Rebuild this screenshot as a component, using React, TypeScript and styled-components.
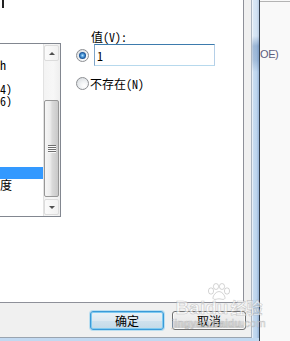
import React from 'react';
import styled, { createGlobalStyle } from 'styled-components';

const GlobalStyle = createGlobalStyle`
  html, body {
    margin: 0;
    padding: 0;
  }
  body {
    width: 290px;
    height: 341px;
    overflow: hidden;
    font-family: "Noto Sans Mono CJK SC", "Noto Sans CJK SC", "Liberation Sans", sans-serif;
    font-size: 12px;
    color: #000;
  }
`;

const Screen = styled.div`
  position: relative;
  display: flex;
  width: 290px;
  height: 341px;
  overflow: hidden;
  background: #f9f9f9;
`;

// the dialog, its left part lies outside the shot
const Window = styled.div`
  flex: none;
  width: 460px;
  margin-left: -200px;
  display: flex;
  flex-direction: column;
`;

const WindowBody = styled.div`
  display: flex;
  height: 338px;
`;

const Client = styled.div`
  flex: 1;
  display: flex;
  flex-direction: column;
  background: #f0f0f0;
  border-right: 1px solid #aab4c0;
  border-bottom: 1px solid #9aa4b0;
`;

const SideFrame = styled.div`
  width: 7px;
  border-right: 1px solid #34404e;
  background:
    linear-gradient(
      to bottom,
      rgba(255, 255, 255, 0.35) 0,
      rgba(255, 255, 255, 0.35) 36px,
      rgba(30, 70, 130, 0.22) 46px,
      rgba(30, 70, 130, 0.18) 60px,
      rgba(255, 255, 255, 0.05) 72px,
      rgba(255, 255, 255, 0) 100%
    ),
    linear-gradient(
      to right,
      #e6eef7 0,
      #e6eef7 1px,
      #c6dbf0 1px,
      #b9d2ec 5px,
      #9dbadc 6px,
      #9dbadc 7px
    );
`;

const BottomFrame = styled.div`
  height: 3px;
  background: #c2d9f1;
  border-right: 1px solid #34404e;
`;

const Panel = styled.div`
  display: flex;
  align-items: flex-start;
  height: 303px;
  box-sizing: border-box;
  margin-right: 7px;
  padding-left: 89px;
  background: #fff;
  border-right: 1px solid #8e9099;
  border-bottom: 1px solid #8e9099;
`;

const LeftColumn = styled.div`
  display: flex;
  flex-direction: column;
`;

const CutMark = styled.div`
  width: 2px;
  height: 8px;
  margin-left: 113px;
  background: #222;
`;

const ListBox = styled.div`
  display: flex;
  width: 172px;
  height: 174px;
  box-sizing: border-box;
  margin-top: 35px;
  border: 1px solid #828790;
  background: #fff;
`;

const Items = styled.div`
  flex: 1;
  padding-top: 3px;
  overflow: hidden;
`;

const Item = styled.div<{ $selected?: boolean }>`
  height: 12px;
  line-height: 12px;
  padding-left: 2px;
  white-space: nowrap;
  overflow: hidden;
  background: ${(p) => (p.$selected ? '#3399ff' : 'transparent')};
  color: ${(p) => (p.$selected ? '#fff' : '#000')};
`;

const ScrollBar = styled.div`
  width: 17px;
  display: flex;
  flex-direction: column;
  background: linear-gradient(to right, #e2e2e2 0, #e2e2e2 1px, #f3f3f3 1px, #f7f7f7 60%, #eeeeee 100%);
`;

const ArrowButton = styled.div`
  box-sizing: border-box;
  margin: 1px 1px 0 1px;
  height: 16px;
  border: 1px solid #dcdcdc;
  border-radius: 2px;
  background: linear-gradient(to right, #fbfbfb, #f1f1f1);
  display: flex;
  align-items: center;
  justify-content: center;
`;

const Arrow = styled.span<{ $down?: boolean }>`
  width: 0;
  height: 0;
  border-left: 3.5px solid transparent;
  border-right: 3.5px solid transparent;
  ${(p) =>
    p.$down
      ? 'border-top: 3px solid #4f4f4f;'
      : 'border-bottom: 3px solid #4f4f4f;'}
`;

const Track = styled.div<{ $size?: number }>`
  height: ${(p) => (p.$size ? `${p.$size}px` : 'auto')};
  flex: ${(p) => (p.$size ? 'none' : '1')};
`;

const Thumb = styled.div`
  height: 97px;
  margin: 0 1px;
  box-sizing: border-box;
  border: 1px solid #979797;
  border-radius: 2px;
  background: linear-gradient(to right, #f6f6f6 0%, #ececec 40%, #dadada 55%, #c9c9c9 100%);
  display: flex;
  align-items: center;
  justify-content: center;
`;

const Grip = styled.span`
  width: 8px;
  height: 8px;
  background: repeating-linear-gradient(to bottom, #6f6f6f 0, #6f6f6f 1px, #fafafa 1px, #fafafa 2px);
`;

const RightColumn = styled.div`
  display: flex;
  flex-direction: column;
  margin-left: 15px;
  padding-top: 29px;
`;

const FieldLabel = styled.div`
  margin-left: 15px;
  height: 15px;
  line-height: 15px;
  white-space: nowrap;
`;

const OptionRow = styled.div<{ $gap: number; $top?: number }>`
  display: flex;
  align-items: center;
  gap: ${(p) => p.$gap}px;
  margin-top: ${(p) => p.$top ?? 0}px;
  white-space: nowrap;
  line-height: 13px;
`;

const Radio = styled.span<{ $checked?: boolean }>`
  flex: none;
  width: 13px;
  height: 13px;
  box-sizing: border-box;
  border-radius: 50%;
  border: 1px solid #8d8f93;
  background: radial-gradient(circle at 65% 70%, #ffffff 0, #f2f4f6 35%, #d2d6da 100%);
  display: flex;
  align-items: center;
  justify-content: center;
  &::after {
    content: '';
    display: ${(p) => (p.$checked ? 'block' : 'none')};
    width: 7px;
    height: 7px;
    border-radius: 50%;
    background: radial-gradient(circle at 50% 50%, #b6e2ff 0, #5aa4e0 28%, #1c5aa0 60%, #0e3468 100%);
  }
`;

const ValueInput = styled.input`
  width: 121px;
  height: 22px;
  box-sizing: border-box;
  margin: 0;
  padding: 0 0 0 2px;
  border: 1px solid;
  border-color: #3d7bad #b5cfe7 #b7d9ed #7ea4c8;
  background: #fff;
  font: inherit;
  color: #000;
  outline: none;
`;

const ButtonBar = styled.div`
  display: flex;
  justify-content: flex-end;
  gap: 8px;
  height: 34px;
  box-sizing: border-box;
  padding: 8px 5px 0 0;
`;

const DialogButton = styled.button<{ $default?: boolean }>`
  width: 74px;
  height: 19px;
  box-sizing: border-box;
  margin: 0;
  padding: 0;
  border-radius: 3px;
  font-family: "Noto Sans CJK SC", sans-serif;
  font-size: 12px;
  line-height: 17px;
  color: #000;
  border: 1px solid ${(p) => (p.$default ? '#3a9ad8' : '#707070')};
  background: ${(p) =>
    p.$default
      ? 'linear-gradient(to bottom, #eaf2f7 0%, #dde9f1 50%, #cfe2ee 50%, #c3dae8 100%)'
      : 'linear-gradient(to bottom, #f2f2f2 0%, #ebebeb 50%, #dddddd 50%, #cfcfcf 100%)'};
  box-shadow: ${(p) =>
    p.$default
      ? 'inset 0 0 0 1px #7fcaf0, 0 0 0 1px rgba(120, 200, 240, 0.45)'
      : 'inset 0 0 0 1px #fbfbfb'};
`;

const BackWindow = styled.div`
  flex: 1;
  margin-top: 1px;
  border-top: 1px solid #b4b4b4;
  background: #f9f9f9;
  padding-top: 45px;
`;

const BackText = styled.div`
  font-family: "Liberation Sans", sans-serif;
  font-size: 11px;
  line-height: 14px;
  letter-spacing: -0.4px;
  color: #5d5d7d;
  white-space: nowrap;
`;

const Watermark = styled.div`
  position: absolute;
  left: 173px;
  top: 283px;
  width: 92px;
  display: flex;
  flex-direction: column;
  align-items: center;
  color: rgba(255, 255, 255, 0.6);
  -webkit-text-stroke: 0.6px rgba(150, 150, 150, 0.5);
  pointer-events: none;
`;

const MarkTitle = styled.div`
  display: flex;
  align-items: baseline;
  font-family: "Liberation Sans", sans-serif;
  font-weight: bold;
  font-size: 19px;
  line-height: 18px;
  margin-top: -2px;
`;

const MarkCn = styled.span`
  font-family: "Noto Sans CJK SC", sans-serif;
  font-size: 16px;
  margin-left: 2px;
`;

const MarkUrl = styled.div`
  font-family: "Liberation Sans", sans-serif;
  font-size: 11px;
  line-height: 12px;
  letter-spacing: 0.3px;
`;

const listRows = [
  { text: '代理设置' },
  { text: '启用智能搜索 Search' },
  { text: '弹出窗口阻止' },
  { text: '文档兼容模式 IE7 (4)' },
  { text: '文档兼容模式 IE8 (6)' },
  { text: '脚本调试' },
  { text: '自动完成' },
  { text: '安全区域' },
  { text: '仿冒网站筛选' },
  { text: '加载项管理' },
  { text: '默认缩放级别', selected: true },
  { text: '默认字体大小缩放程度' },
  { text: '历史记录' },
  { text: '临时文件' },
];

const Paw = () => (
  <svg width="26" height="17" viewBox="0 0 26 17" fill="rgba(255,255,255,0.5)" stroke="rgba(150,150,150,0.5)" strokeWidth="0.8">
    <ellipse cx="5" cy="8" rx="2.6" ry="3.2" />
    <ellipse cx="10" cy="3.5" rx="2.6" ry="3" />
    <ellipse cx="16" cy="3.5" rx="2.6" ry="3" />
    <ellipse cx="21" cy="8" rx="2.6" ry="3.2" />
    <path d="M13 8.5c-3 0-5.5 3.5-6 5.8-.4 1.8 1.5 2.4 3 2 1.2-.3 2-.5 3-.5s1.8.2 3 .5c1.5.4 3.4-.2 3-2-.5-2.3-3-5.8-6-5.8z" />
  </svg>
);

export default function App() {
  return (
    <>
      <GlobalStyle />
      <Screen>
        <Window>
          <WindowBody>
            <Client>
              <Panel>
                <LeftColumn>
                  <CutMark />
                  <ListBox>
                    <Items>
                      {listRows.map((row, i) => (
                        <Item key={i} $selected={row.selected}>
                          {row.text}
                        </Item>
                      ))}
                    </Items>
                    <ScrollBar>
                      <ArrowButton>
                        <Arrow />
                      </ArrowButton>
                      <Track $size={39} />
                      <Thumb>
                        <Grip />
                      </Thumb>
                      <Track />
                      <ArrowButton>
                        <Arrow $down />
                      </ArrowButton>
                      <Track $size={1} />
                    </ScrollBar>
                  </ListBox>
                </LeftColumn>
                <RightColumn>
                  <FieldLabel>值(V):</FieldLabel>
                  <OptionRow $gap={5}>
                    <Radio $checked />
                    <ValueInput value="1" readOnly />
                  </OptionRow>
                  <OptionRow $gap={1} $top={11}>
                    <Radio />
                    <span>不存在(N)</span>
                  </OptionRow>
                </RightColumn>
              </Panel>
              <ButtonBar>
                <DialogButton $default>确定</DialogButton>
                <DialogButton>取消</DialogButton>
              </ButtonBar>
            </Client>
            <SideFrame />
          </WindowBody>
          <BottomFrame />
        </Window>
        <BackWindow>
          <BackText>OE)</BackText>
        </BackWindow>
        <Watermark>
          <Paw />
          <MarkTitle>
            Baidu<MarkCn>经验</MarkCn>
          </MarkTitle>
          <MarkUrl>jingyan.baidu.com</MarkUrl>
        </Watermark>
      </Screen>
    </>
  );
}
